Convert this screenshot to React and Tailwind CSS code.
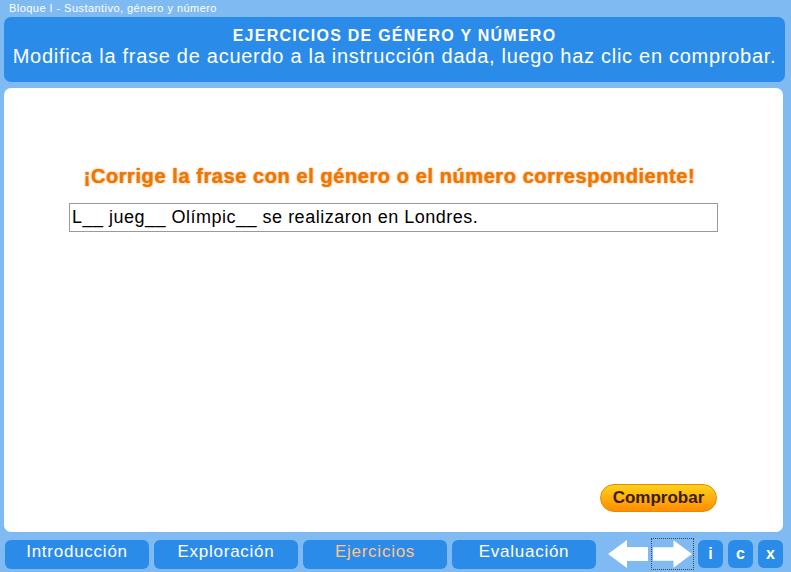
import React from 'react';

const tabs = [
    { label: 'Introducción', active: false },
    { label: 'Exploración', active: false },
    { label: 'Ejercicios', active: true },
    { label: 'Evaluación', active: false },
];

const ArrowLeft = () => (
    <svg width="42" height="30" viewBox="0 0 42 30">
        <polygon points="1,15 20,1 20,8 41,8 41,22 20,22 20,29" fill="#ffffff" />
    </svg>
);

const ArrowRight = () => (
    <svg width="42" height="30" viewBox="0 0 42 30">
        <polygon points="41,15 22,1 22,8 1,8 1,22 22,22 22,29" fill="#ffffff" />
    </svg>
);

const App = () => {
    return (
        <div
            className="w-[791px] h-[572px] bg-[#7fbbf2] flex flex-col overflow-hidden"
            style={{ fontFamily: '"Liberation Sans", Arial, sans-serif' }}
        >
            <div className="h-[17px] pl-[9px] text-[11px] leading-[16px] tracking-[0.45px] text-white">
                Bloque I - Sustantivo, género y número
            </div>

            <div className="mx-[4px] mr-[6px] h-[65px] rounded-[7px] bg-[#2b8be8] flex flex-col items-center pt-[9px] text-white">
                <div className="text-[16px] leading-[19px] font-bold tracking-[1.25px]">EJERCICIOS DE GÉNERO Y NÚMERO</div>
                <div className="text-[20px] leading-[23px] tracking-[0.72px]">
                    Modifica la frase de acuerdo a la instrucción dada, luego haz clic en comprobar.
                </div>
            </div>

            <div className="mt-[6px] ml-[4px] mr-[8px] h-[444px] rounded-[7px] bg-white flex flex-col">
                <div className="pt-[76px] pr-[8px] text-center text-[20px] leading-[24px] font-bold tracking-[0.58px] text-[#f07600] [text-shadow:0_0_3px_#ffc890,0_0_1px_#b85000]">
                    ¡Corrige la frase con el género o el número correspondiente!
                </div>
                <div className="mt-[15px] mx-[65px] h-[29px] border border-[#9a9a9a] flex items-center px-[2px] text-[18px] tracking-[0.5px] text-black">
                    L__ jueg__ Olímpic__ se realizaron en Londres.
                </div>
                <div className="flex-1" />
                <div className="flex justify-end pr-[66px] pb-[20px]">
                    <button className="w-[117px] h-[28px] rounded-full border border-[#e98a00] bg-linear-to-b from-[#ffd21a] to-[#ff8c00] text-[17px] font-bold text-[#3b1c00]">
                        Comprobar
                    </button>
                </div>
            </div>

            <div className="mt-[6px] flex items-center pl-[5px]">
                <div className="flex gap-[5px]">
                    {tabs.map((t) => (
                        <div
                            key={t.label}
                            className={`w-[144px] h-[29px] pb-[4px] rounded-[6px] bg-[#2b8be8] flex items-center justify-center text-[17px] tracking-[0.75px] ${
                                t.active ? 'text-[#ffc38a]' : 'text-white'
                            }`}
                        >
                            {t.label}
                        </div>
                    ))}
                </div>
                <div className="ml-[11px] flex items-center">
                    <ArrowLeft />
                    <div className="ml-[2px] w-[43px] h-[32px] border border-dotted border-[#444] flex items-center justify-center">
                        <ArrowRight />
                    </div>
                </div>
                <div className="ml-[4px] flex gap-[5px]">
                    {['i', 'c', 'x'].map((b) => (
                        <div
                            key={b}
                            className="w-[25px] h-[28px] rounded-[6px] bg-[#2b8be8] flex items-center justify-center text-[16px] font-bold text-white"
                        >
                            {b}
                        </div>
                    ))}
                </div>
            </div>
        </div>
    );
};

export default App;
